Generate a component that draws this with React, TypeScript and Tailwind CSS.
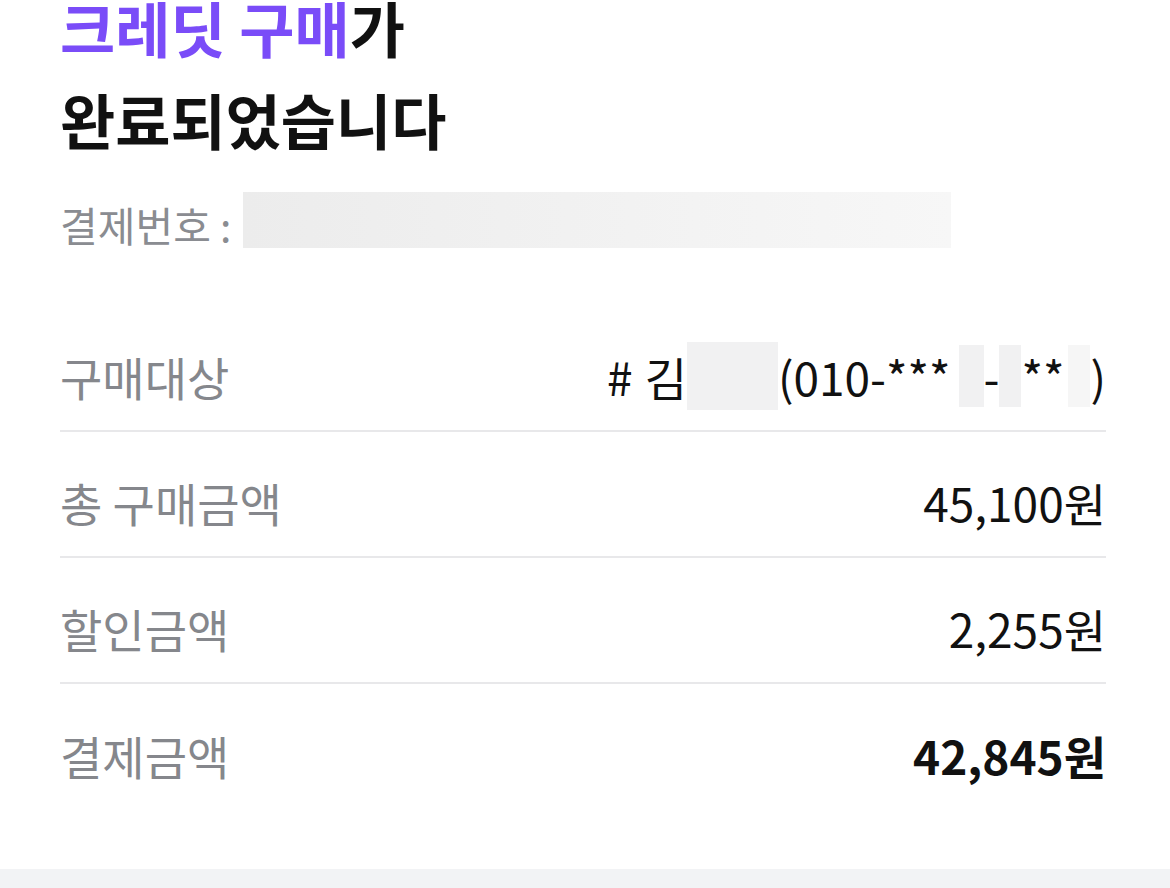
const font = { fontFamily: '"Noto Sans CJK KR", "Noto Sans", sans-serif' };

function Row({ label, children, last }: { label: string; children: React.ReactNode; last?: boolean }) {
  return (
    <div className={`flex items-center justify-between h-[126px] pt-[16px] ${last ? "" : "border-b-2 border-[#e8e8ea]"}`}>
      <span className="text-[46px] text-[#85878c]">{label}</span>
      <div className="flex items-center text-[46px] text-[#111111]">{children}</div>
    </div>
  );
}

function Mask({ className }: { className: string }) {
  return <span className={`inline-block bg-[#f1f1f2] ${className}`} />;
}

export default function App() {
  return (
    <div className="w-[1170px] h-[888px] bg-white flex flex-col overflow-hidden" style={font}>
      <div className="px-[60px]">
        <h1 className="text-[60px] font-bold text-[#111111]">
          <div className="leading-[62px] -mt-[4px]">
            <span className="text-[#7a4cf8]">크레딧 구매</span>가
          </div>
          <div className="leading-[62px] mt-[30px]">완료되었습니다</div>
        </h1>
        <div className="flex items-center mt-[42px] h-[56px]">
          <span className="text-[41px] text-[#8a8c91] mr-[12px] relative top-[5px]">결제번호 :</span>
          <span className="inline-block w-[708px] h-[56px] bg-gradient-to-r from-[#ececec] to-[#f7f7f7]" />
        </div>
        <div className="mt-[58px] pr-[4px]">
          <Row label="구매대상">
            <span className="mr-3">#</span>
            <span>김</span>
            <Mask className="w-[91px] h-[68px]" />
            <span>(010-***</span>
            <Mask className="w-[25px] h-[62px] ml-[8px]" />
            <span>-</span>
            <Mask className="w-[22px] h-[62px]" />
            <span>**</span>
            <Mask className="w-[22px] h-[62px] ml-[4px] bg-[#f6f6f6]" />
            <span>)</span>
          </Row>
          <Row label="총 구매금액">45,100원</Row>
          <Row label="할인금액">2,255원</Row>
          <Row label="결제금액" last>
            <span className="font-bold">42,845원</span>
          </Row>
        </div>
      </div>
      <div className="mt-auto h-[19px] bg-[#f2f3f5]" />
    </div>
  );
}
